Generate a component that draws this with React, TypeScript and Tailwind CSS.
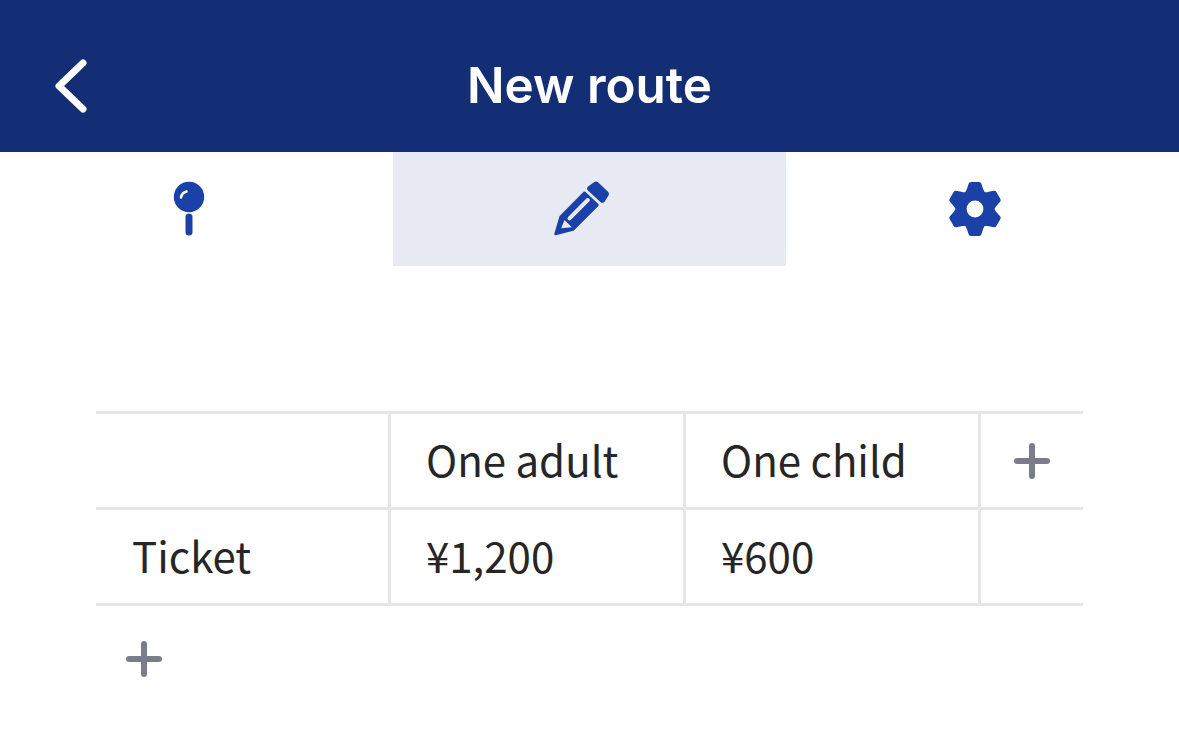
import React from "react";

const gearPath = () => {
  const pts: string[] = [];
  const at = (angle: number, across: number, out: number) => {
    const x = 30 + across * Math.cos(angle) + out * Math.sin(angle);
    const y = 30 + across * Math.sin(angle) - out * Math.cos(angle);
    return `${x.toFixed(2)} ${y.toFixed(2)}`;
  };
  for (let k = 0; k < 6; k++) {
    const a = (k * Math.PI) / 3;
    pts.push(at(a, -6, 18.5), at(a, -4, 24.5), at(a, 4, 24.5), at(a, 6, 18.5));
    pts.push(at(a + Math.PI / 6, 0, 16.5));
  }
  return `M${pts.join("L")}Z`;
};

function PinIcon() {
  return (
    <svg viewBox="0 0 60 60" className="h-[60px] w-[60px]">
      <circle cx="30" cy="18" r="15.2" fill="#1b41a8" />
      <path d="M22 18.5a7.5 7.5 0 0 1 5.5-6" fill="none" stroke="#fff" strokeWidth="2.6" strokeLinecap="round" />
      <path d="M30 38v15" stroke="#1b41a8" strokeWidth="7" strokeLinecap="round" />
    </svg>
  );
}

function PencilIcon() {
  return (
    <svg viewBox="0 0 60 60" className="h-[60px] w-[60px]">
      <path
        d="M3.5 55L8.5 38L32.5 13.7L45.5 26L21 50.5Z"
        fill="#1b41a8"
        stroke="#1b41a8"
        strokeWidth="2.5"
        strokeLinejoin="round"
      />
      <path
        d="M38.2 9.6L44 5.5L54 15L50.4 20.7Z"
        fill="#1b41a8"
        stroke="#1b41a8"
        strokeWidth="6"
        strokeLinejoin="round"
      />
      <path d="M35.8 21L17.5 39.3" stroke="#e8eaf3" strokeWidth="4" strokeLinecap="round" />
      <path d="M9.2 49.3L12.5 41L19.8 48.3Z" fill="#e8eaf3" />
    </svg>
  );
}

function GearIcon() {
  return (
    <svg viewBox="0 0 60 60" className="h-[60px] w-[60px]">
      <path d={gearPath()} fill="#1b41a8" stroke="#1b41a8" strokeWidth="5" strokeLinejoin="round" />
      <circle cx="30" cy="30" r="8.4" fill="#fff" />
    </svg>
  );
}

function PlusIcon() {
  return (
    <svg viewBox="0 0 36 36" className="h-9 w-9">
      <path d="M18 3v30M3 18h30" stroke="#7b7d8b" strokeWidth="6" strokeLinecap="round" />
    </svg>
  );
}

function Cell({ children, first, last }: { children?: React.ReactNode; first?: boolean; last?: boolean }) {
  return (
    <div
      className={`flex h-[96px] items-center border-b-[3px] border-[#e6e6ea] ${
        last ? "pl-[33px]" : "border-r-[3px] pb-[4px]"
      } ${first ? "pl-[36px]" : last ? "" : "pl-[35px]"}`}
    >
      {children}
    </div>
  );
}

export default function App() {
  return (
    <div
      className="min-h-[745px] bg-white text-[#262626]"
      style={{ fontFamily: '"Noto Sans CJK JP", "Noto Sans", sans-serif' }}
    >
      <header className="relative flex h-[152px] items-center justify-center bg-[#132e75] pt-[19px]">
        <svg viewBox="0 0 40 60" className="absolute left-[50px] top-[56px] h-[60px] w-[40px]">
          <path
            d="M33 7L9 30L33 53"
            fill="none"
            stroke="#fff"
            strokeWidth="7"
            strokeLinecap="round"
            strokeLinejoin="round"
          />
        </svg>
        <h1 className="font-['Inter'] text-[49.4px] font-semibold leading-none text-white">New route</h1>
      </header>

      <nav className="grid h-[114px] grid-cols-[393px_393px_393px]">
        <div className="flex items-center justify-center pr-[15px]">
          <PinIcon />
        </div>
        <div className="flex items-center justify-center bg-[#e8eaf3] pr-[15px]">
          <PencilIcon />
        </div>
        <div className="flex items-center justify-center pr-[15px]">
          <GearIcon />
        </div>
      </nav>

      <div className="ml-[96px] mt-[145px] w-[987px] border-t-[3px] border-[#e6e6ea]">
        <div className="grid grid-cols-[295px_295px_295px_102px] text-[42px] leading-none">
          <Cell first />
          <Cell>One adult</Cell>
          <Cell>One child</Cell>
          <Cell last>
            <PlusIcon />
          </Cell>
          <Cell first>Ticket</Cell>
          <Cell>¥1,200</Cell>
          <Cell>¥600</Cell>
          <Cell last />
        </div>
        <div className="pl-[30px] pt-[35px]">
          <PlusIcon />
        </div>
      </div>
    </div>
  );
}
